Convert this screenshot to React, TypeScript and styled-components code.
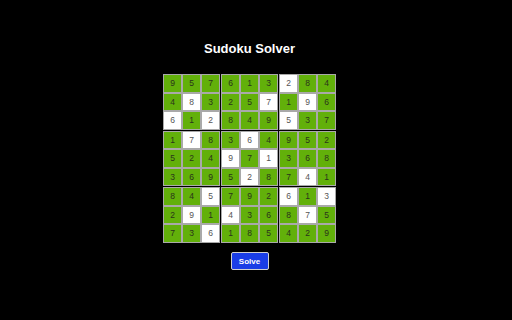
import styled, { createGlobalStyle } from "styled-components";

const GlobalStyle = createGlobalStyle`
  html, body {
    margin: 0;
    padding: 0;
    background: #000;
    font-family: "Liberation Sans", Arial, sans-serif;
  }
`;

// digits of the solved board; "w" in the mask marks a cell the user typed in
const board = [
  "957613284",
  "483257196",
  "612849537",
  "178364952",
  "524971368",
  "369528741",
  "845792613",
  "291436875",
  "736185429",
];
const mask = [
  "......w..",
  ".w...w.w.",
  "w.w...w..",
  ".w..w....",
  "...w.w...",
  "....w..w.",
  "..w...w.w",
  ".w.w...w.",
  "..w......",
];

const Page = styled.div`
  width: 499px;
  display: flex;
  flex-direction: column;
  align-items: center;
`;

const Title = styled.h1`
  margin: 41px 0 18px;
  font-size: 13px;
  line-height: 15px;
  font-weight: bold;
  color: #fff;
`;

const Board = styled.div`
  display: flex;
  flex-direction: column;
`;

const Row = styled.div<{ $boxEnd: boolean }>`
  display: flex;
  margin-bottom: ${(p) => (p.$boxEnd ? "1px" : "0")};
`;

const Cell = styled.div<{ $given: boolean; $boxEnd: boolean }>`
  box-sizing: border-box;
  width: 19px;
  height: 18.5px;
  margin-right: ${(p) => (p.$boxEnd ? "1px" : "0")};
  border: 1px solid #a9a9a9;
  background: ${(p) => (p.$given ? "#62b00a" : "#fff")};
  color: ${(p) => (p.$given ? "#2a331c" : "#555")};
  font-size: 8.5px;
  display: flex;
  align-items: center;
  justify-content: center;
`;

const SolveButton = styled.button`
  margin-top: 9.5px;
  box-sizing: border-box;
  width: 38px;
  height: 18px;
  padding: 0;
  border: 1px solid #d0d0d0;
  border-radius: 2px;
  background: #1a3de6;
  color: #fff;
  font-family: "Liberation Sans", Arial, sans-serif;
  font-size: 8px;
  font-weight: bold;
`;

export default function App() {
  return (
    <>
      <GlobalStyle />
      <Page>
        <Title>Sudoku Solver</Title>
        <Board>
          {board.map((row, r) => (
            <Row key={r} $boxEnd={r === 2 || r === 5}>
              {row.split("").map((d, c) => (
                <Cell
                  key={c}
                  $given={mask[r][c] !== "w"}
                  $boxEnd={c === 2 || c === 5}
                >
                  {d}
                </Cell>
              ))}
            </Row>
          ))}
        </Board>
        <SolveButton>Solve</SolveButton>
      </Page>
    </>
  );
}
